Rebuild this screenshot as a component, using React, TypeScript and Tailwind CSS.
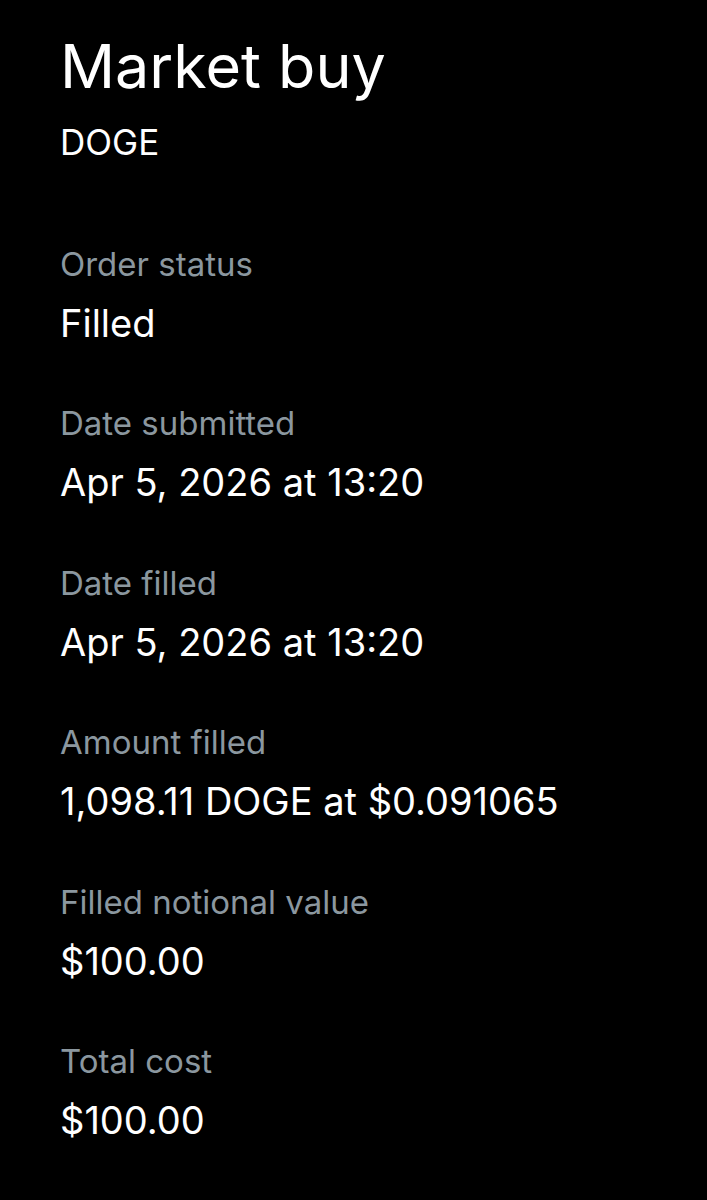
import React from "react";

const rows: { label: string; value: string }[] = [
  { label: "Order status", value: "Filled" },
  { label: "Date submitted", value: "Apr 5, 2026 at 13:20" },
  { label: "Date filled", value: "Apr 5, 2026 at 13:20" },
  { label: "Amount filled", value: "1,098.11 DOGE at $0.091065" },
  { label: "Filled notional value", value: "$100.00" },
  { label: "Total cost", value: "$100.00" },
];

export default function App() {
  return (
    <div
      className="min-h-[1200px] w-full bg-black pl-[60px] pt-[30px] text-white"
      style={{ fontFamily: "Inter, 'Liberation Sans', sans-serif" }}
    >
      <h1 className="text-[61px] leading-[72px] font-normal text-white">Market buy</h1>
      <div className="mt-5 text-[35px] leading-[40px] text-white">DOGE</div>
      <div className="mt-[82px] flex flex-col gap-[58.4px]">
        {rows.map((r) => (
          <div key={r.label} className="flex flex-col gap-[17px]">
            <div className="text-[33px] leading-[40px] text-[#8b979f]">{r.label}</div>
            <div className="text-[38px] leading-[44px] text-white">{r.value}</div>
          </div>
        ))}
      </div>
    </div>
  );
}
